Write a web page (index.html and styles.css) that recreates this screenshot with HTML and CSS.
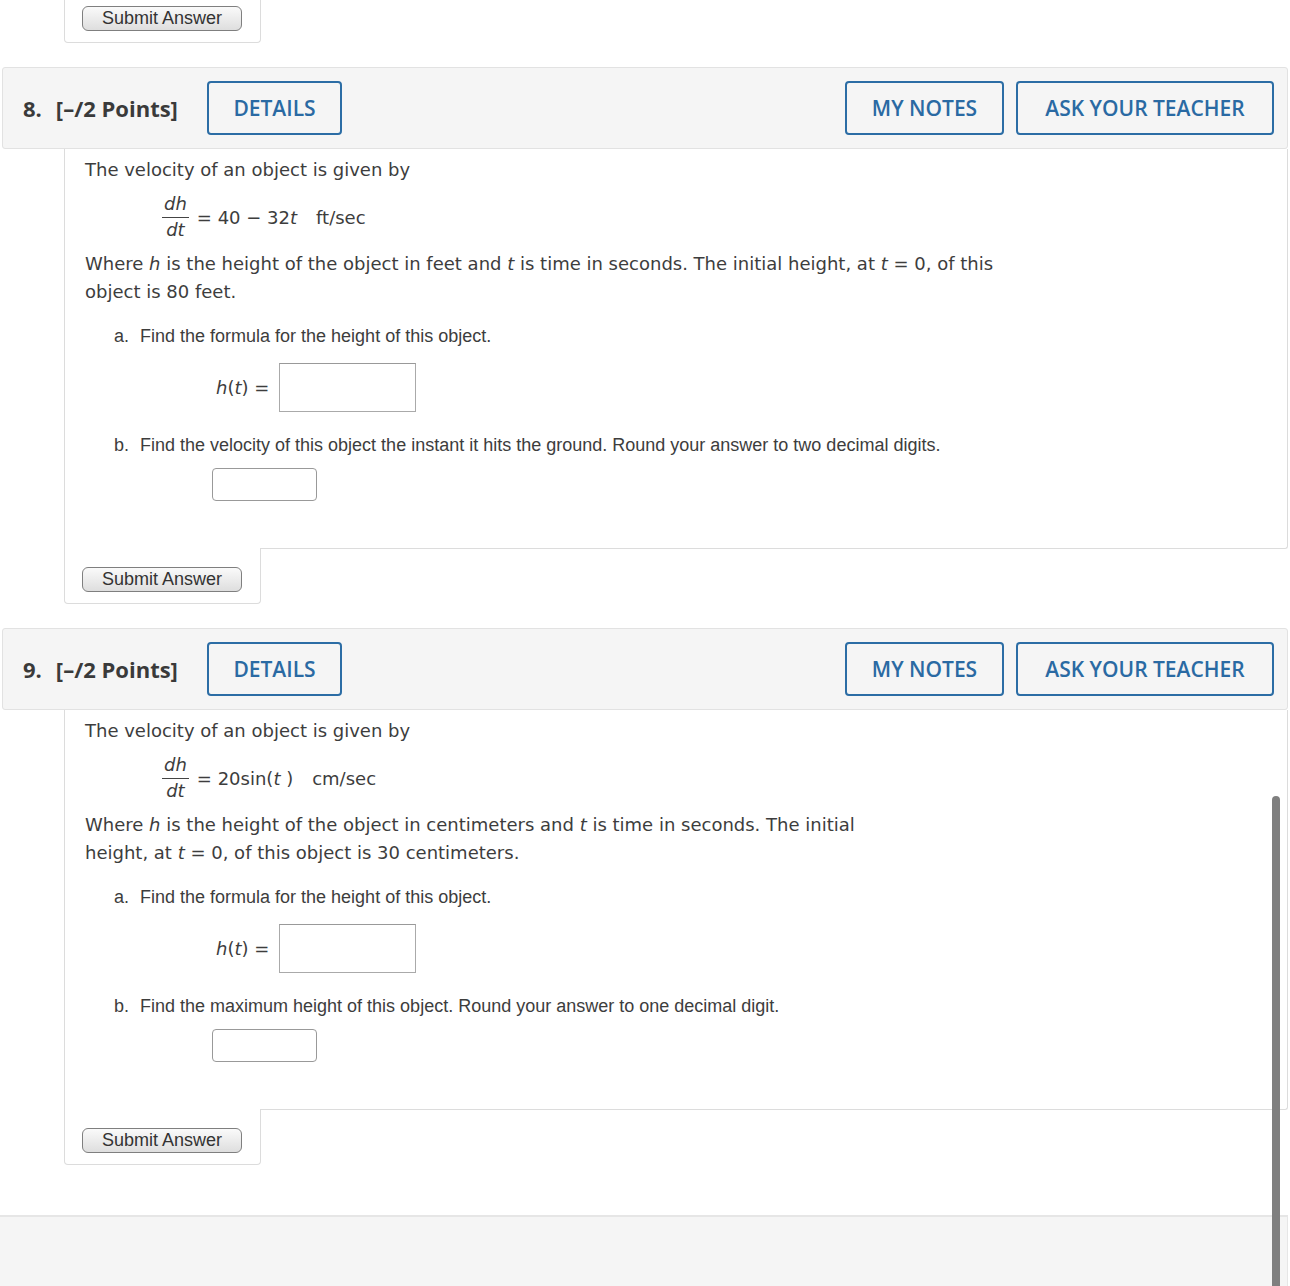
FILE: index.html
```html
<!DOCTYPE html>
<html>
<head>
<meta charset="utf-8">
<link rel="stylesheet" href="styles.css">
</head>
<body>
<div class="page">
  <div class="submit-box submit-box--first">
    <button class="submit-btn">Submit Answer</button>
  </div>

  <div class="question">
    <div class="q-head">
      <div class="q-title"><span class="q-num">8.</span>[–/2 Points]</div>
      <button class="q-btn q-btn--details">DETAILS</button>
      <div class="spacer"></div>
      <button class="q-btn q-btn--notes">MY NOTES</button>
      <button class="q-btn q-btn--ask">ASK YOUR TEACHER</button>
    </div>
    <div class="q-body">
      <p class="txt">The velocity of an object is given by</p>
      <div class="formula">
        <span class="frac"><span class="num">dh</span><span class="den">dt</span></span>
        <span class="eq">= 40 − 32<i>t</i></span>
        <span class="unit">ft/sec</span>
      </div>
      <p class="txt para">Where <i>h</i> is the height of the object in feet and <i>t</i> is time in seconds. The initial height, at <i>t</i> = 0, of this<br>object is 80 feet.</p>
      <div class="part"><span class="lbl">a.</span>Find the formula for the height of this object.</div>
      <div class="ans-row">
        <span class="ht"><i>h</i>(<i>t</i>) =</span>
        <span class="box-big"></span>
      </div>
      <div class="part part--b"><span class="lbl">b.</span>Find the velocity of this object the instant it hits the ground. Round your answer to two decimal digits.</div>
      <div class="small-row"><span class="box-small"></span></div>
    </div>
    <div class="submit-box">
      <button class="submit-btn">Submit Answer</button>
    </div>
  </div>

  <div class="question">
    <div class="q-head">
      <div class="q-title"><span class="q-num">9.</span>[–/2 Points]</div>
      <button class="q-btn q-btn--details">DETAILS</button>
      <div class="spacer"></div>
      <button class="q-btn q-btn--notes">MY NOTES</button>
      <button class="q-btn q-btn--ask">ASK YOUR TEACHER</button>
    </div>
    <div class="q-body">
      <p class="txt">The velocity of an object is given by</p>
      <div class="formula">
        <span class="frac"><span class="num">dh</span><span class="den">dt</span></span>
        <span class="eq">= 20sin(<i>t</i> )</span>
        <span class="unit">cm/sec</span>
      </div>
      <p class="txt para">Where <i>h</i> is the height of the object in centimeters and <i>t</i> is time in seconds. The initial<br>height, at <i>t</i> = 0, of this object is 30 centimeters.</p>
      <div class="part"><span class="lbl">a.</span>Find the formula for the height of this object.</div>
      <div class="ans-row">
        <span class="ht"><i>h</i>(<i>t</i>) =</span>
        <span class="box-big"></span>
      </div>
      <div class="part part--b"><span class="lbl">b.</span>Find the maximum height of this object. Round your answer to one decimal digit.</div>
      <div class="small-row"><span class="box-small"></span></div>
    </div>
    <div class="submit-box">
      <button class="submit-btn">Submit Answer</button>
    </div>
  </div>

  <div class="footer"></div>
</div>
<div class="scrollbar"></div>
</body>
</html>
```

FILE: styles.css
```css
html {
  overflow: hidden;
}
html, body {
  margin: 0;
  padding: 0;
  background: #fff;
}
.page {
  padding: 0 2px 0 2px;
  width: 1286px;
}
.question {
  margin-top: 24px;
}
.q-head {
  display: flex;
  align-items: center;
  height: 80px;
  background: #f5f5f5;
  border: 1px solid #e2e2e2;
  border-radius: 3px;
  padding: 0 13px 0 20px;
}
.q-title {
  font-family: "Open Sans", sans-serif;
  font-weight: 700;
  font-size: 22px;
  color: #3a3a3a;
  width: 184px;
}
.q-num {
  margin-right: 14px;
}
.spacer { flex: 1; }
.q-btn {
  font-family: "Open Sans", sans-serif;
  font-size: 21px;
  font-weight: 600;
  color: #2a6aa3;
  background: #f5f5f5;
  border: 2px solid #2c6da5;
  border-radius: 4px;
  height: 54px;
  padding: 0;
}
.q-btn--details { width: 135px; }
.q-btn--notes { width: 159px; margin-right: 12px; }
.q-btn--ask { width: 258px; }

.q-body {
  margin-left: 62px;
  border-left: 1px solid #dcdcdc;
  border-right: 1px solid #dcdcdc;
  border-bottom: 1px solid #dcdcdc;
  border-radius: 0 0 3px 0;
  height: 400px;
  padding: 0 0 0 20px;
  font-family: "DejaVu Sans", Verdana, sans-serif;
  color: #3d3d3d;
  box-sizing: border-box;
}
.txt {
  margin: 0;
  font-size: 18px;
  line-height: 28px;
}
.q-body > .txt:first-child {
  padding-top: 7px;
}
.formula {
  display: flex;
  align-items: center;
  margin-left: 77px;
  height: 66px;
  font-size: 18px;
}
.frac {
  display: inline-flex;
  flex-direction: column;
  align-items: center;
  font-style: italic;
  margin-right: 8px;
}
.num {
  border-bottom: 1px solid #444;
  padding: 0 2px 1px;
  line-height: 24px;
}
.den {
  line-height: 24px;
}
.eq { margin-right: 19px; }
.para { margin-top: 0; }
.part {
  font-family: "Liberation Sans", Arial, sans-serif;
  font-size: 18px;
  color: #3d3d3d;
  margin-left: 29px;
  margin-top: 20px;
  line-height: 20px;
}
.lbl {
  display: inline-block;
  width: 26px;
}
.part--b { margin-top: 23px; }
.ans-row {
  display: flex;
  align-items: center;
  margin-left: 131px;
  margin-top: 17px;
  font-size: 18px;
}
.ht { margin-right: 10px; }
.box-big {
  display: inline-block;
  width: 135px;
  height: 47px;
  border: 1px solid #aaa;
  border-top-color: #999;
  background: #fff;
}
.small-row {
  margin-left: 127px;
  margin-top: 13px;
}
.box-small {
  display: block;
  width: 103px;
  height: 31px;
  border: 1px solid #999;
  border-radius: 4px;
  background: #fff;
}
.submit-box {
  margin-left: 62px;
  margin-top: -1px;
  width: 197px;
  height: 56px;
  border: 1px solid #dcdcdc;
  border-top: none;
  border-radius: 0 0 4px 4px;
  background: #fff;
  position: relative;
  box-sizing: border-box;
  padding: 19px 0 0 17px;
}
.submit-box--first {
  margin-top: -14px;
  height: 57px;
  padding-top: 20px;
}
.submit-btn {
  font-family: "Liberation Sans", Arial, sans-serif;
  font-size: 18px;
  color: #333;
  width: 160px;
  height: 25px;
  padding: 0;
  border: 1px solid #7f7f7f;
  border-radius: 6px;
  background: linear-gradient(#fafafa, #dedede);
  line-height: 21px;
}
.footer {
  margin-top: 50px;
  margin-left: -2px;
  height: 120px;
  background: #f5f5f5;
  border-top: 2px solid #e6e6e6;
  border-right: 1px solid #e6e6e6;
}
.scrollbar {
  position: absolute;
  left: 1272px;
  top: 796px;
  width: 8px;
  height: 500px;
  background: #7f7f7f;
  border-radius: 4px 4px 0 0;
}
```
